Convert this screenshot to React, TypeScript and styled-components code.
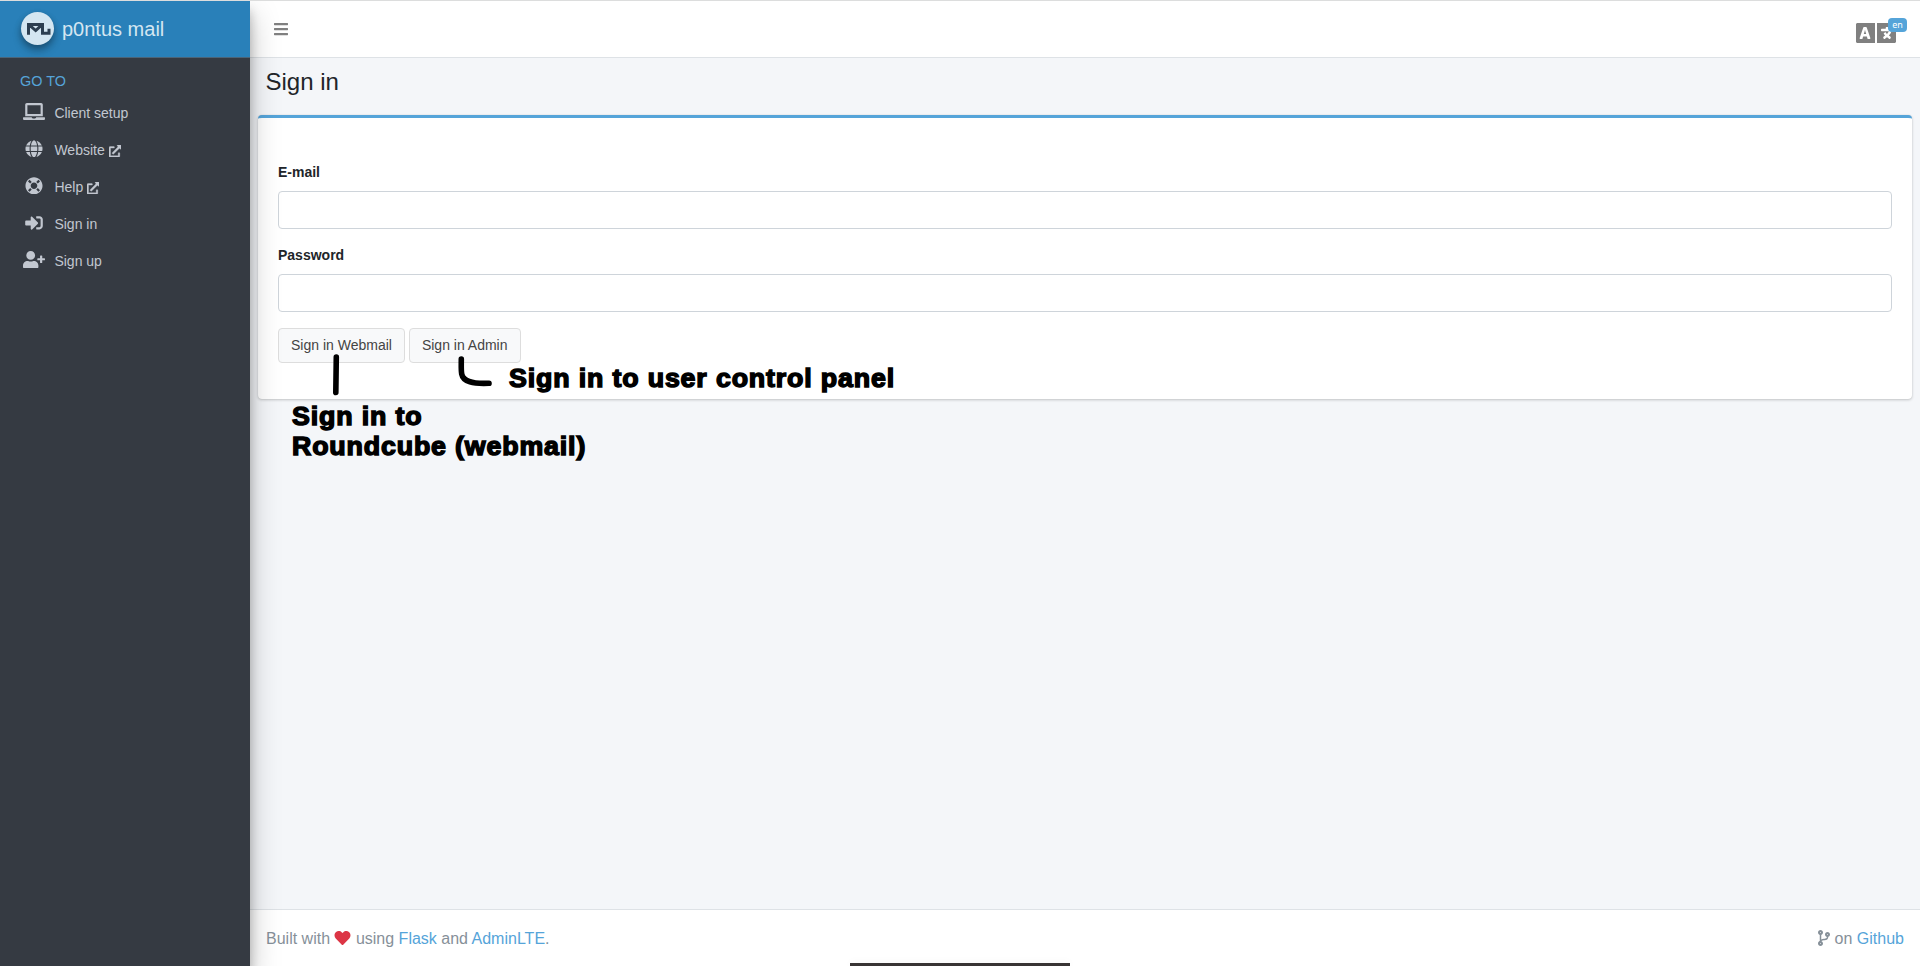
import React from 'react';
import styled, { createGlobalStyle } from 'styled-components';
import {
  FaBars, FaCodeBranch, FaExternalLinkAlt, FaGlobe, FaHeart,
  FaLanguage, FaLaptop, FaLifeRing, FaSignInAlt, FaUserPlus,
} from 'react-icons/fa';
import type { IconType } from 'react-icons';

const GlobalStyle = createGlobalStyle`
  *, *::before, *::after { box-sizing: border-box; }
  body {
    margin: 0;
    overflow: hidden;
    font-family: "Liberation Sans", Arial, sans-serif;
    font-size: 14px;
    line-height: 1.5;
    color: #212529;
    background: #f4f6f9;
  }
`;

const accent = '#55a4d9';

const Page = styled.div`
  position: relative;
  display: flex;
  height: 966px;
  border-top: 1px solid #dcdddd;
  overflow: hidden;
`;

const Sidebar = styled.aside`
  position: relative;
  z-index: 2;
  width: 250px;
  flex: none;
  background: #353a42;
  box-shadow: 0 14px 28px rgba(0, 0, 0, 0.25), 0 10px 10px rgba(0, 0, 0, 0.22);
`;

const Brand = styled.div`
  display: flex;
  align-items: center;
  height: 57px;
  padding: 0 0 2px 21px;
  gap: 8px;
  background: #2980b9;
  border-bottom: 1px solid #4b6478;
  color: #d4e6f1;
  font-size: 20px;
`;

const BrandLogo = styled.svg`
  width: 33px;
  height: 33px;
  border-radius: 50%;
  background: #d4e6f1;
  box-shadow: 0 3px 6px rgba(0, 0, 0, 0.25), 0 6px 10px rgba(0, 0, 0, 0.2);
`;

const BrandName = styled.span`
  padding-top: 2px;
`;

const NavHeader = styled.div`
  padding: 13px 20px 0;
  font-size: 14.4px;
  line-height: 21px;
  color: ${accent};
`;

const NavList = styled.ul`
  list-style: none;
  margin: 0;
  padding: 3px 8px 0;
`;

const NavItem = styled.li`
  display: flex;
  align-items: center;
  height: 37px;
  padding-left: 12px;
  color: #c2c7d0;
`;

const NavIcon = styled.span`
  display: flex;
  justify-content: center;
  width: 28px;
  margin-right: 6.4px;
  padding-bottom: 4px;
  svg { width: 22px; height: 17.6px; }
`;

const NavText = styled.span`
  display: flex;
  align-items: center;
  gap: 4px;
  svg { font-size: 12.3px; margin-top: 1px; stroke: currentColor; stroke-width: 14px; }
`;

const Main = styled.div`
  flex: 1;
  display: flex;
  flex-direction: column;
  min-width: 0;
`;

const Navbar = styled.header`
  display: flex;
  justify-content: space-between;
  height: 57px;
  flex: none;
  padding: 0 24px;
  background: #fff;
  border-bottom: 1px solid #dee2e6;
  color: #808080;
`;

const MenuButton = styled.span`
  display: flex;
  align-items: center;
  font-size: 16px;
  svg { width: 14px; }
`;

const Language = styled.span`
  position: relative;
  display: flex;
  padding-top: 16px;
  font-size: 32px;
  svg { width: 40px; height: 32px; }
`;

const LanguageBadge = styled.span`
  position: absolute;
  top: 17px;
  right: -11px;
  width: 19px;
  height: 14px;
  border-radius: 4px;
  background: ${accent};
  color: #fff;
  font: 9px/14px "Noto Sans", sans-serif;
  text-align: center;
`;

const Content = styled.main`
  position: relative;
  flex: 1;
  padding: 0 8px;
`;

const Title = styled.h1`
  margin: 0;
  height: 57px;
  padding: 9px 7.5px 0;
  font-size: 24px;
  font-weight: 400;
  line-height: 29px;
`;

const Card = styled.section`
  height: 284px;
  padding: 44px 20px 0;
  background: #fff;
  border-top: 3px solid ${accent};
  border-radius: 4px;
  box-shadow: 0 0 1px rgba(0, 0, 0, 0.125), 0 1px 3px rgba(0, 0, 0, 0.2);
`;

const Label = styled.label`
  display: block;
  margin-bottom: 8px;
  font-weight: 700;
  line-height: 21px;
`;

const Input = styled.input`
  display: block;
  width: 100%;
  height: 38px;
  margin-bottom: 16px;
  border: 1px solid #ced4da;
  border-radius: 4px;
  background: #fff;
`;

const ButtonRow = styled.div`
  display: flex;
  gap: 4px;
`;

const Button = styled.button`
  height: 35px;
  padding: 0 12px;
  border: 1px solid #ddd;
  border-radius: 4px;
  background: #f8f9fa;
  color: #444;
  font: 14px/21px "Liberation Sans", Arial, sans-serif;
`;

const Note = styled.div<{ $x: number; $y: number }>`
  position: absolute;
  left: ${(p) => p.$x}px;
  top: ${(p) => p.$y}px;
  color: #000;
  font: 700 25px/30px "Liberation Sans", Arial, sans-serif;
  letter-spacing: 0.8px;
  -webkit-text-stroke: 1.4px #000;
  transform: scaleX(1.07);
  transform-origin: 0 0;
  white-space: pre;
`;

const Strokes = styled.svg`
  position: absolute;
  left: 70px;
  top: 290px;
  width: 180px;
  height: 60px;
`;

const Footer = styled.footer`
  display: flex;
  justify-content: space-between;
  height: 57px;
  flex: none;
  padding: 17px 16px 15px;
  background: #fff;
  border-top: 1px solid #dee2e6;
  color: #869099;
  font-size: 16px;
  line-height: 24px;
`;

const Link = styled.a`
  color: ${accent};
`;

const Inline = styled.span<{ $color?: string }>`
  color: ${(p) => p.$color ?? 'inherit'};
`;

const FooterIcon = styled.span<{ $width: number; $color?: string }>`
  color: ${(p) => p.$color ?? 'inherit'};
  svg { width: ${(p) => p.$width}px; height: 16px; vertical-align: -2px; }
`;

const BottomHandle = styled.div`
  position: absolute;
  z-index: 3;
  left: 850px;
  bottom: 0;
  width: 220px;
  height: 3px;
  background: #383434;
  box-shadow: 0 0 10px rgba(0, 0, 0, 0.06);
`;

const items: { icon: IconType; text: string; external?: boolean }[] = [
  { icon: FaLaptop, text: 'Client setup' },
  { icon: FaGlobe, text: 'Website', external: true },
  { icon: FaLifeRing, text: 'Help', external: true },
  { icon: FaSignInAlt, text: 'Sign in' },
  { icon: FaUserPlus, text: 'Sign up' },
];

export default function App() {
  return (
    <Page>
      <GlobalStyle />
      <Sidebar>
        <Brand>
          <BrandLogo viewBox="0 0 33 33">
            <path
              d="M7.5 22.7V12.5h14v8.8h6.5v-4.6M8.8 13.4l5.9 5.2 5.6-5.2"
              fill="none" stroke="#2c3e50" strokeWidth="3"
            />
          </BrandLogo>
          <BrandName>p0ntus mail</BrandName>
        </Brand>
        <NavHeader>GO TO</NavHeader>
        <NavList>
          {items.map(({ icon: Icon, text, external }) => (
            <NavItem key={text}>
              <NavIcon><Icon /></NavIcon>
              <NavText>{text}{external && <FaExternalLinkAlt />}</NavText>
            </NavItem>
          ))}
        </NavList>
      </Sidebar>
      <Main>
        <Navbar>
          <MenuButton><FaBars /></MenuButton>
          <Language>
            <FaLanguage />
            <LanguageBadge>en</LanguageBadge>
          </Language>
        </Navbar>
        <Content>
          <Title>Sign in</Title>
          <Card>
            <Label htmlFor="email">E-mail</Label>
            <Input id="email" />
            <Label htmlFor="password">Password</Label>
            <Input id="password" type="password" />
            <ButtonRow>
              <Button>Sign in Webmail</Button>
              <Button>Sign in Admin</Button>
            </ButtonRow>
          </Card>
          <Strokes viewBox="0 0 180 60" fill="none" stroke="#000" strokeWidth="5.6" strokeLinecap="round" strokeLinejoin="round">
            <path d="M16.3 9L15.8 44.5" />
            <path d="M141.3 11C141.3 17 141 22 141.7 26C143.2 34 153 36 169 35.3" />
          </Strokes>
          <Note $x={258.5} $y={305}>Sign in to user control panel</Note>
          <Note $x={41.5} $y={343}>{'Sign in to\nRoundcube (webmail)'}</Note>
        </Content>
        <Footer>
          <Inline>
            Built with <FooterIcon $width={17} $color="#dc3545"><FaHeart /></FooterIcon> using <Link>Flask</Link> and <Link>AdminLTE</Link>.
          </Inline>
          <Inline><FooterIcon $width={12}><FaCodeBranch /></FooterIcon> on <Link>Github</Link></Inline>
        </Footer>
      </Main>
      <BottomHandle />
    </Page>
  );
}
